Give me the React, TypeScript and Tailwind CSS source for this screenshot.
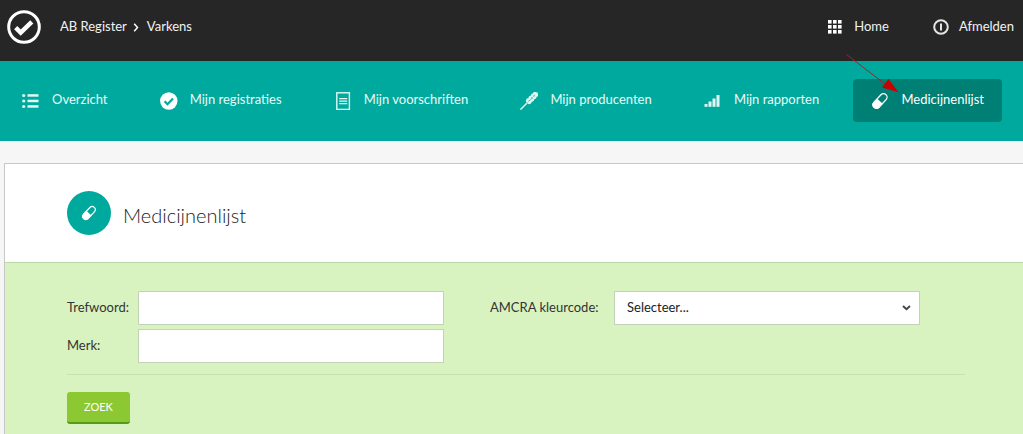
import type { ReactNode } from 'react';

type IconProps = {
  className?: string;
};

type NavItemProps = {
  icon: ReactNode;
  label: string;
  active?: boolean;
  children?: ReactNode;
};

function LogoIcon() {
  return (
    <svg className="size-[34px]" viewBox="0 0 34 34" fill="none">
      <circle cx="17" cy="17" r="15.3" stroke="#fff" strokeWidth="3" />
      <path d="M8.7 17.6l5 5L24.8 11.8" stroke="#fff" strokeWidth="4.4" />
    </svg>
  );
}

function GridIcon() {
  return (
    <svg className="size-[14px]" viewBox="0 0 14 14" fill="#fff">
      {[0, 5, 10].map((y) =>
        [0, 5, 10].map((x) => <rect key={`${x}-${y}`} x={x} y={y} width="3.6" height="3.6" />)
      )}
    </svg>
  );
}

function PowerIcon() {
  return (
    <svg className="size-4" viewBox="0 0 16 16" fill="none" stroke="#e4e4e4">
      <circle cx="8" cy="8" r="6.8" strokeWidth="2" />
      <path d="M8 4.4v7.2" strokeWidth="2" />
    </svg>
  );
}

function ListIcon() {
  return (
    <svg className="size-[18px]" viewBox="0 0 18 18" fill="#e2f8f2">
      {[2.2, 7.7, 13.2].map((y) => (
        <g key={y}>
          <circle cx="1.7" cy={y + 1.3} r="1.6" />
          <rect x="5.5" y={y} width="11" height="2.5" />
        </g>
      ))}
    </svg>
  );
}

function CheckIcon() {
  return (
    <svg className="size-[18px]" viewBox="0 0 18 18" fill="none">
      <circle cx="8.8" cy="9" r="8.7" fill="#fff" />
      <path d="M4.6 9.2l2.9 3L13 6.4" stroke="#00a99d" strokeWidth="2.2" />
    </svg>
  );
}

function DocumentIcon() {
  return (
    <svg className="size-[18px]" viewBox="0 0 18 18" fill="none" stroke="#e2f8f2">
      <rect x="2.8" y="0.8" width="12.6" height="16.6" strokeWidth="1.4" />
      <path d="M5.2 6.7h8M5.2 9.2h8M5.2 11.7h8" strokeWidth="1.2" />
    </svg>
  );
}

function WheatIcon() {
  return (
    <svg className="size-[18px]" viewBox="0 0 18 18" fill="#e2f8f2">
      <path d="M0.4 17.6L8 10" stroke="#e2f8f2" strokeWidth="1.5" />
      <g transform="rotate(45 9 9)">
        <path d="M9 -3.4c1.3 1.2 1.6 2.5 0 4.2c-1.600-1.700-1.300-3 0-4.200z" />
        {[-0.6, 2.8, 6.2, 9.6].map((y) => (
          <g key={y}>
            <ellipse cx="7.4" cy={y} rx="1.4" ry="2.1" transform={`rotate(-16 7.4 ${y})`} />
            <ellipse cx="10.6" cy={y} rx="1.4" ry="2.1" transform={`rotate(16 10.6 ${y})`} />
          </g>
        ))}
        <path d="M9 0v13" stroke="#8ad9d0" strokeWidth="0.6" />
      </g>
    </svg>
  );
}

function BarsIcon() {
  return (
    <svg className="size-[18px]" viewBox="0 0 18 18" fill="#e2f8f2">
      <rect x="0.5" y="12" width="3" height="2.8" />
      <rect x="4.5" y="9.5" width="3" height="5.3" />
      <rect x="8.5" y="6.5" width="3" height="8.3" />
      <rect x="12.5" y="3" width="3" height="11.8" />
    </svg>
  );
}

function PillIcon({ className }: IconProps) {
  return (
    <svg className={className} viewBox="0 0 18 18" fill="none">
      <g transform="rotate(-47 9 9)">
        <rect x="0.3" y="5.5" width="17.4" height="7" rx="3.5" stroke="#fff" strokeWidth="1.3" />
        <path d="M8.8 5H3.8a4 4 0 0 0 0 8h5z" fill="#fff" />
      </g>
    </svg>
  );
}

function PointerArrow() {
  return (
    <svg
      className="pointer-events-none absolute -top-[25px] -left-[7px] h-10 w-14"
      viewBox="0 0 56 40"
      aria-hidden="true"
    >
      <path d="M0.5 0.5L39 30" stroke="#a02328" strokeWidth="1" />
      <path d="M36 33.5l6.5-8.5L52.5 38.3z" fill="#c80000" />
    </svg>
  );
}

function NavItem({ icon, label, active, children }: NavItemProps) {
  return (
    <a
      href="#"
      className={
        active
          ? 'relative flex h-[43px] items-center gap-3 rounded bg-[#008075] px-[18px] whitespace-nowrap text-white'
          : 'flex h-[43px] items-center gap-3 px-[18px] whitespace-nowrap text-[#e8fbf7]'
      }
    >
      <span className="mt-[2px] shrink-0">{icon}</span>
      {label}
      {children}
    </a>
  );
}

export default function App() {
  return (
    <div className="flex min-h-screen flex-col bg-[#f6f6f6] font-['Lato','Liberation_Sans',sans-serif] text-[13px] text-[#333]">
      <header className="flex h-[61px] items-center justify-between bg-[#262626] pr-[9px] pb-[7px] pl-[7px] text-[#f2f2f2]">
        <div className="flex items-center gap-[19px]">
          <LogoIcon />
          <nav className="flex items-center" aria-label="Kruimelpad">
            <a href="#">AB Register</a>
            <svg className="mx-[6px] h-[9px] w-[6px]" viewBox="0 0 6 9" fill="none">
              <path d="M1.2 0.8L4.5 4.5L1.2 8.2" stroke="#fff" strokeWidth="1.5" />
            </svg>
            <a href="#" className="ml-[2px]">Varkens</a>
          </nav>
        </div>
        <div className="flex items-center gap-[44px]">
          <a href="#" className="flex items-center gap-3">
            <GridIcon />
            Home
          </a>
          <a href="#" className="flex items-center gap-[10px]">
            <PowerIcon />
            Afmelden
          </a>
        </div>
      </header>

      <nav className="flex h-20 items-center justify-between bg-[#00a99d] pr-[21px] pb-[2px] pl-1">
        <NavItem icon={<ListIcon />} label="Overzicht" />
        <NavItem icon={<CheckIcon />} label="Mijn registraties" />
        <NavItem icon={<DocumentIcon />} label="Mijn voorschriften" />
        <NavItem icon={<WheatIcon />} label="Mijn producenten" />
        <NavItem icon={<BarsIcon />} label="Mijn rapporten" />
        <NavItem icon={<PillIcon className="size-[18px]" />} label="Medicijnenlijst" active>
          <PointerArrow />
        </NavItem>
      </nav>

      <main className="mt-[22px] ml-1 flex grow flex-col border-t border-l border-[#c8c8c8] bg-white">
        <div className="flex h-[98px] items-center gap-3 pl-[62px]">
          <span className="flex size-11 items-center justify-center rounded-full bg-[#00a99d]">
            <PillIcon className="size-4" />
          </span>
          <h1 className="pt-1 text-xl font-light text-[#222]">Medicijnenlijst</h1>
        </div>

        <form className="grow border-t border-[#bcd8a6] bg-[#d9f3c0] pt-7 pr-[58px] pl-[62px]">
          <div className="flex items-start gap-[46px]">
            <div className="flex max-w-[377px] flex-1 flex-col gap-1">
              <div className="flex items-center">
                <label htmlFor="trefwoord" className="w-[71px] shrink-0">Trefwoord:</label>
                <input id="trefwoord" type="text" className="h-[34px] w-full border border-[#c3d3b8] bg-white px-3" />
              </div>
              <div className="flex items-center">
                <label htmlFor="merk" className="w-[71px] shrink-0">Merk:</label>
                <input id="merk" type="text" className="h-[34px] w-full border border-[#c3d3b8] bg-white px-3" />
              </div>
            </div>
            <div className="flex max-w-[430px] flex-1 items-center">
              <label htmlFor="kleurcode" className="w-[124px] shrink-0">AMCRA kleurcode:</label>
              <div className="relative w-full">
                <select
                  id="kleurcode"
                  className="h-[34px] w-full appearance-none border border-[#c3d3b8] bg-white px-3 text-[#222]"
                >
                  <option>Selecteer...</option>
                </select>
                <svg
                  className="pointer-events-none absolute top-[14px] right-[9px] h-[6px] w-[9px]"
                  viewBox="0 0 9 6"
                  fill="none"
                >
                  <path d="M1 1l3.5 3.3L8 1" stroke="#444" strokeWidth="1.9" />
                </svg>
              </div>
            </div>
          </div>
          <hr className="mt-[11px] border-[#c6e3b0]" />
          <button
            type="button"
            className="mt-[17px] h-8 rounded-[3px] border-b-2 border-[#579a1a] bg-[#8cc832] px-[17px] text-[11px] text-white"
          >
            ZOEK
          </button>
        </form>
      </main>
    </div>
  );
}
